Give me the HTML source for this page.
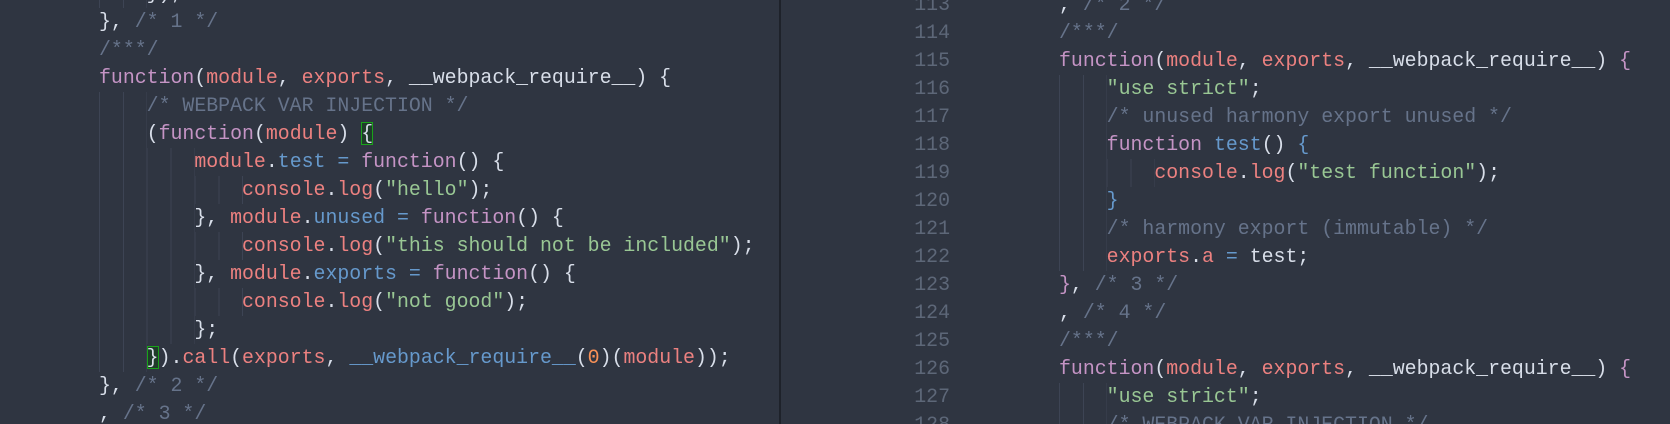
<!DOCTYPE html>
<html><head><meta charset="utf-8"><style>
html,body{margin:0;padding:0;width:1670px;height:424px;overflow:hidden;background:#2f3541;}
.p{position:absolute;top:0;height:424px;overflow:hidden}
.l{position:absolute;height:28px;line-height:28px;font-family:"Liberation Mono",monospace;font-size:19.88px;white-space:pre;color:#d8dee9}
.g{position:absolute;top:0;height:28px;background:repeating-linear-gradient(to right,#3d4454 0 1px,transparent 1px 23.86px)}
.n{position:absolute;width:60px;text-align:right;height:28px;line-height:28px;font-family:"Liberation Mono",monospace;font-size:19.88px;color:#5d6778}
.k{color:#c594c5}.v{color:#ec8180}.b{color:#6699cc}.s{color:#99c794}.c{color:#66738a}.o{color:#f99157}
.h{outline:1px solid #1aa31a;outline-offset:-1px;background:#1f3b2a}
</style></head><body>
<div class="p" style="left:0;width:779px">
<div class="l" style="left:99px;top:-20px"><span class="g" style="width:48px"></span>    });</div>
<div class="l" style="left:99px;top:8px">}, <span class="c">/* 1 */</span></div>
<div class="l" style="left:99px;top:36px"><span class="c">/***/</span></div>
<div class="l" style="left:99px;top:64px"><span class="k">function</span>(<span class="v">module</span>, <span class="v">exports</span>, __webpack_require__) {</div>
<div class="l" style="left:99px;top:92px"><span class="g" style="width:48px"></span>    <span class="c">/* WEBPACK VAR INJECTION */</span></div>
<div class="l" style="left:99px;top:120px"><span class="g" style="width:48px"></span>    (<span class="k">function</span>(<span class="v">module</span>) <span class="h">{</span></div>
<div class="l" style="left:99px;top:148px"><span class="g" style="width:96px"></span>        <span class="v">module</span>.<span class="b">test</span> <span class="b">=</span> <span class="k">function</span>() {</div>
<div class="l" style="left:99px;top:176px"><span class="g" style="width:144px"></span>            <span class="v">console</span>.<span class="v">log</span>(<span class="s">"hello"</span>);</div>
<div class="l" style="left:99px;top:204px"><span class="g" style="width:96px"></span>        }, <span class="v">module</span>.<span class="b">unused</span> <span class="b">=</span> <span class="k">function</span>() {</div>
<div class="l" style="left:99px;top:232px"><span class="g" style="width:144px"></span>            <span class="v">console</span>.<span class="v">log</span>(<span class="s">"this should not be included"</span>);</div>
<div class="l" style="left:99px;top:260px"><span class="g" style="width:96px"></span>        }, <span class="v">module</span>.<span class="b">exports</span> <span class="b">=</span> <span class="k">function</span>() {</div>
<div class="l" style="left:99px;top:288px"><span class="g" style="width:144px"></span>            <span class="v">console</span>.<span class="v">log</span>(<span class="s">"not good"</span>);</div>
<div class="l" style="left:99px;top:316px"><span class="g" style="width:96px"></span>        };</div>
<div class="l" style="left:99px;top:344px"><span class="g" style="width:48px"></span>    <span class="h">}</span>).<span class="v">call</span>(<span class="v">exports</span>, <span class="b">__webpack_require__</span>(<span class="o">0</span>)(<span class="v">module</span>));</div>
<div class="l" style="left:99px;top:372px">}, <span class="c">/* 2 */</span></div>
<div class="l" style="left:99px;top:400px">, <span class="c">/* 3 */</span></div>
</div>
<div style="position:absolute;left:779px;top:0;width:2px;height:424px;background:#1e222a"></div>
<div class="p" style="left:781px;width:889px">
<div class="n" style="left:109px;top:-9px">113</div>
<div class="n" style="left:109px;top:19px">114</div>
<div class="n" style="left:109px;top:47px">115</div>
<div class="n" style="left:109px;top:75px">116</div>
<div class="n" style="left:109px;top:103px">117</div>
<div class="n" style="left:109px;top:131px">118</div>
<div class="n" style="left:109px;top:159px">119</div>
<div class="n" style="left:109px;top:187px">120</div>
<div class="n" style="left:109px;top:215px">121</div>
<div class="n" style="left:109px;top:243px">122</div>
<div class="n" style="left:109px;top:271px">123</div>
<div class="n" style="left:109px;top:299px">124</div>
<div class="n" style="left:109px;top:327px">125</div>
<div class="n" style="left:109px;top:355px">126</div>
<div class="n" style="left:109px;top:383px">127</div>
<div class="n" style="left:109px;top:411px">128</div>
<div class="l" style="left:278px;top:-9px">, <span class="c">/* 2 */</span></div>
<div class="l" style="left:278px;top:19px"><span class="c">/***/</span></div>
<div class="l" style="left:278px;top:47px"><span class="k">function</span>(<span class="v">module</span>, <span class="v">exports</span>, __webpack_require__) <span class="k">{</span></div>
<div class="l" style="left:278px;top:75px"><span class="g" style="width:48px"></span>    <span class="s">"use strict"</span>;</div>
<div class="l" style="left:278px;top:103px"><span class="g" style="width:48px"></span>    <span class="c">/* unused harmony export unused */</span></div>
<div class="l" style="left:278px;top:131px"><span class="g" style="width:48px"></span>    <span class="k">function</span> <span class="b">test</span>() <span class="b">{</span></div>
<div class="l" style="left:278px;top:159px"><span class="g" style="width:96px"></span>        <span class="v">console</span>.<span class="v">log</span>(<span class="s">"test function"</span>);</div>
<div class="l" style="left:278px;top:187px"><span class="g" style="width:48px"></span>    <span class="b">}</span></div>
<div class="l" style="left:278px;top:215px"><span class="g" style="width:48px"></span>    <span class="c">/* harmony export (immutable) */</span></div>
<div class="l" style="left:278px;top:243px"><span class="g" style="width:48px"></span>    <span class="v">exports</span>.<span class="v">a</span> <span class="b">=</span> test;</div>
<div class="l" style="left:278px;top:271px"><span class="k">}</span>, <span class="c">/* 3 */</span></div>
<div class="l" style="left:278px;top:299px">, <span class="c">/* 4 */</span></div>
<div class="l" style="left:278px;top:327px"><span class="c">/***/</span></div>
<div class="l" style="left:278px;top:355px"><span class="k">function</span>(<span class="v">module</span>, <span class="v">exports</span>, __webpack_require__) <span class="k">{</span></div>
<div class="l" style="left:278px;top:383px"><span class="g" style="width:48px"></span>    <span class="s">"use strict"</span>;</div>
<div class="l" style="left:278px;top:411px"><span class="g" style="width:48px"></span>    <span class="c">/* WEBPACK VAR INJECTION */</span></div>
</div>
</body></html>
